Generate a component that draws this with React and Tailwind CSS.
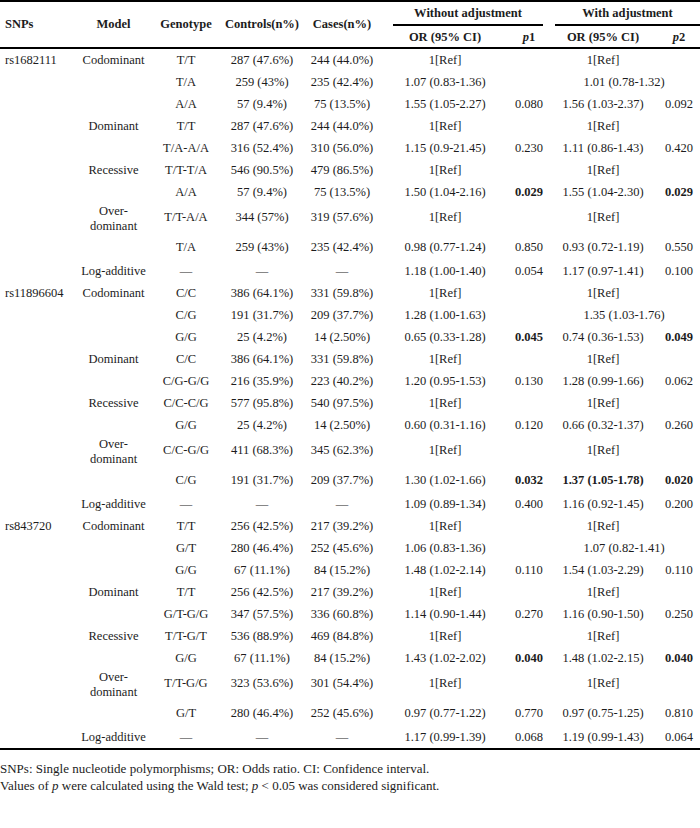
import React from 'react';

// '*' prefix = bold value, null p2 = OR spans both "with adjustment" columns
const blocks = [
  {
    snp: 'rs1682111',
    models: [
      ['Codominant', [
        ['T/T', '287 (47.6%)', '244 (44.0%)', '1[Ref]', '', '1[Ref]', ''],
        ['T/A', '259 (43%)', '235 (42.4%)', '1.07 (0.83-1.36)', '', '1.01 (0.78-1.32)', null],
        ['A/A', '57 (9.4%)', '75 (13.5%)', '1.55 (1.05-2.27)', '0.080', '1.56 (1.03-2.37)', '0.092'],
      ]],
      ['Dominant', [
        ['T/T', '287 (47.6%)', '244 (44.0%)', '1[Ref]', '', '1[Ref]', ''],
        ['T/A-A/A', '316 (52.4%)', '310 (56.0%)', '1.15 (0.9-21.45)', '0.230', '1.11 (0.86-1.43)', '0.420'],
      ]],
      ['Recessive', [
        ['T/T-T/A', '546 (90.5%)', '479 (86.5%)', '1[Ref]', '', '1[Ref]', ''],
        ['A/A', '57 (9.4%)', '75 (13.5%)', '1.50 (1.04-2.16)', '*0.029', '1.55 (1.04-2.30)', '*0.029'],
      ]],
      ['Over-dominant', [
        ['T/T-A/A', '344 (57%)', '319 (57.6%)', '1[Ref]', '', '1[Ref]', ''],
        ['T/A', '259 (43%)', '235 (42.4%)', '0.98 (0.77-1.24)', '0.850', '0.93 (0.72-1.19)', '0.550'],
      ]],
      ['Log-additive', [
        ['—', '—', '—', '1.18 (1.00-1.40)', '0.054', '1.17 (0.97-1.41)', '0.100'],
      ]],
    ],
  },
  {
    snp: 'rs11896604',
    models: [
      ['Codominant', [
        ['C/C', '386 (64.1%)', '331 (59.8%)', '1[Ref]', '', '1[Ref]', ''],
        ['C/G', '191 (31.7%)', '209 (37.7%)', '1.28 (1.00-1.63)', '', '1.35 (1.03-1.76)', null],
        ['G/G', '25 (4.2%)', '14 (2.50%)', '0.65 (0.33-1.28)', '*0.045', '0.74 (0.36-1.53)', '*0.049'],
      ]],
      ['Dominant', [
        ['C/C', '386 (64.1%)', '331 (59.8%)', '1[Ref]', '', '1[Ref]', ''],
        ['C/G-G/G', '216 (35.9%)', '223 (40.2%)', '1.20 (0.95-1.53)', '0.130', '1.28 (0.99-1.66)', '0.062'],
      ]],
      ['Recessive', [
        ['C/C-C/G', '577 (95.8%)', '540 (97.5%)', '1[Ref]', '', '1[Ref]', ''],
        ['G/G', '25 (4.2%)', '14 (2.50%)', '0.60 (0.31-1.16)', '0.120', '0.66 (0.32-1.37)', '0.260'],
      ]],
      ['Over-dominant', [
        ['C/C-G/G', '411 (68.3%)', '345 (62.3%)', '1[Ref]', '', '1[Ref]', ''],
        ['C/G', '191 (31.7%)', '209 (37.7%)', '1.30 (1.02-1.66)', '*0.032', '*1.37 (1.05-1.78)', '*0.020'],
      ]],
      ['Log-additive', [
        ['—', '—', '—', '1.09 (0.89-1.34)', '0.400', '1.16 (0.92-1.45)', '0.200'],
      ]],
    ],
  },
  {
    snp: 'rs843720',
    models: [
      ['Codominant', [
        ['T/T', '256 (42.5%)', '217 (39.2%)', '1[Ref]', '', '1[Ref]', ''],
        ['G/T', '280 (46.4%)', '252 (45.6%)', '1.06 (0.83-1.36)', '', '1.07 (0.82-1.41)', null],
        ['G/G', '67 (11.1%)', '84 (15.2%)', '1.48 (1.02-2.14)', '0.110', '1.54 (1.03-2.29)', '0.110'],
      ]],
      ['Dominant', [
        ['T/T', '256 (42.5%)', '217 (39.2%)', '1[Ref]', '', '1[Ref]', ''],
        ['G/T-G/G', '347 (57.5%)', '336 (60.8%)', '1.14 (0.90-1.44)', '0.270', '1.16 (0.90-1.50)', '0.250'],
      ]],
      ['Recessive', [
        ['T/T-G/T', '536 (88.9%)', '469 (84.8%)', '1[Ref]', '', '1[Ref]', ''],
        ['G/G', '67 (11.1%)', '84 (15.2%)', '1.43 (1.02-2.02)', '*0.040', '1.48 (1.02-2.15)', '*0.040'],
      ]],
      ['Over-dominant', [
        ['T/T-G/G', '323 (53.6%)', '301 (54.4%)', '1[Ref]', '', '1[Ref]', ''],
        ['G/T', '280 (46.4%)', '252 (45.6%)', '0.97 (0.77-1.22)', '0.770', '0.97 (0.75-1.25)', '0.810'],
      ]],
      ['Log-additive', [
        ['—', '—', '—', '1.17 (0.99-1.39)', '0.068', '1.19 (0.99-1.43)', '0.064'],
      ]],
    ],
  },
];

const Val = ({ v }) => {
  if (v && v.startsWith('*')) return <span className="font-bold">{v.slice(1)}</span>;
  return <>{v}</>;
};

export default function App() {
  return (
    <div className="w-[700px] bg-white text-[#1c1c1c] font-['Liberation_Serif','Times_New_Roman',serif]">
      <table className="w-[700px] table-fixed border-collapse border-t-2 border-b-2 border-black text-[12.5px]">
        <colgroup>
          <col className="w-[75px]" />
          <col className="w-[77px]" />
          <col className="w-[68px]" />
          <col className="w-[84px]" />
          <col className="w-[76px]" />
          <col className="w-[130px]" />
          <col className="w-[38px]" />
          <col className="w-[110px]" />
          <col className="w-[42px]" />
        </colgroup>
        <thead>
          <tr className="h-[24px]">
            <th rowSpan={2} className="text-left pl-[5px] font-bold border-b-2 border-black">SNPs</th>
            <th rowSpan={2} className="text-center font-bold border-b-2 border-black">Model</th>
            <th rowSpan={2} className="text-center font-bold border-b-2 border-black">Genotype</th>
            <th rowSpan={2} className="text-center font-bold border-b-2 border-black">Controls(n%)</th>
            <th rowSpan={2} className="text-center font-bold border-b-2 border-black">Cases(n%)</th>
            <th colSpan={2} className="p-0 align-top font-bold">
              <div className="ml-[13px] mr-[5px] h-[24px] leading-[22px] border-b-2 border-black text-center">
                Without adjustment
              </div>
            </th>
            <th colSpan={2} className="p-0 align-top font-bold">
              <div className="ml-[7px] h-[24px] leading-[22px] border-b-2 border-black text-center">
                With adjustment
              </div>
            </th>
          </tr>
          <tr className="h-[22px]">
            <th className="text-center font-bold border-b-2 border-black leading-[20px]">OR (95% CI)</th>
            <th className="text-center font-bold border-b-2 border-black leading-[20px]">
              <i>p</i>1
            </th>
            <th className="text-center font-bold border-b-2 border-black leading-[20px]">OR (95% CI)</th>
            <th className="text-center font-bold border-b-2 border-black leading-[20px]">
              <i>p</i>2
            </th>
          </tr>
        </thead>
        <tbody>
          {blocks.map((block) =>
            block.models.map(([model, rows], mi) =>
              rows.map((r, ri) => {
                const isOver = model === 'Over-dominant';
                const trH = isOver ? (ri === 0 ? 'h-[31px]' : 'h-[26px]') : 'h-[22px]';
                const cell = isOver && ri === 0
                  ? 'p-0 pb-[3px] align-middle text-center whitespace-nowrap leading-[22px]'
                  : 'p-0 align-middle text-center whitespace-nowrap leading-[22px]';
                return (
                  <tr key={block.snp + model + ri} className={trH}>
                    <td className="p-0 pl-[5px] align-middle text-left whitespace-nowrap leading-[22px]">
                      {mi === 0 && ri === 0 ? block.snp : ''}
                    </td>
                    <td className="p-0 align-middle text-center whitespace-nowrap leading-[22px]">
                      {ri === 0 && isOver ? (
                        <div className="leading-[15px]">
                          Over-
                          <br />
                          dominant
                        </div>
                      ) : ri === 0 ? model : ''}
                    </td>
                    <td className={cell}>{r[0]}</td>
                    <td className={cell}>{r[1]}</td>
                    <td className={cell}>{r[2]}</td>
                    <td className={cell}><Val v={r[3]} /></td>
                    <td className={cell}><Val v={r[4]} /></td>
                    {r[6] === null ? (
                      <td colSpan={2} className={cell}><Val v={r[5]} /></td>
                    ) : (
                      <>
                        <td className={cell}><Val v={r[5]} /></td>
                        <td className={cell}><Val v={r[6]} /></td>
                      </>
                    )}
                  </tr>
                );
              })
            )
          )}
        </tbody>
      </table>
      <div className="mt-[10px] text-[13px] leading-[17px]">
        <p>SNPs: Single nucleotide polymorphisms; OR: Odds ratio. CI: Confidence interval.</p>
        <p>
          Values of <i>p</i> were calculated using the Wald test; <i>p</i> &lt; 0.05 was considered significant.
        </p>
      </div>
    </div>
  );
}
